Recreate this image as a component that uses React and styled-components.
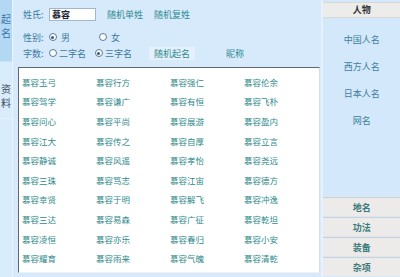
import React from "react";
import styled, { createGlobalStyle } from "styled-components";

const Global = createGlobalStyle`
  html, body { margin: 0; padding: 0; background: #d6eafb; }
  body { font-family: "Noto Sans CJK SC", "Liberation Sans", sans-serif; }
`;

const Frame = styled.div`
  width: 400px;
  height: 277px;
  display: flex;
  overflow: hidden;
  background: #d6eafb;
`;

const LeftTabs = styled.div`
  width: 12px;
  display: flex;
  flex-direction: column;
  border-right: 1px solid #eaf4fd;
  background: #d8ecfb;
`;

const Tab = styled.div`
  height: ${(p) => p.$h}px;
  box-sizing: border-box;
  background: ${(p) => (p.$active ? "#b3d8f4" : "#d8ecfb")};
  border-bottom: 1px solid ${(p) => (p.$active ? "#c4e0f6" : "#e6f2fc")};
  color: ${(p) => (p.$active ? "#3c74ac" : "#3b4a5a")};
  font-size: 10px;
  line-height: 14px;
  padding-top: ${(p) => p.$pt}px;
  display: flex;
  flex-direction: column;
  align-items: flex-end;
  overflow: hidden;
  span { display: block; width: 10px; margin-right: 1px; }
`;

const Main = styled.div`
  width: 309px;
  display: flex;
  flex-direction: column;
  padding-left: 5px;
  box-sizing: border-box;
`;

const Row = styled.div`
  display: flex;
  align-items: center;
  height: 14px;
  margin-top: ${(p) => p.$mt}px;
  padding-left: 5px;
  font-size: 9px;
  color: #3d7aa0;
`;

const Label = styled.div`
  width: 26px;
  white-space: nowrap;
`;

const NameInput = styled.div`
  width: 47px;
  height: 13px;
  box-sizing: border-box;
  background: #fff;
  border: 1px solid #9fb8cc;
  font-size: 9px;
  line-height: 11px;
  padding-left: 2px;
  color: #223;
  font-weight: 600;
`;

const Link = styled.div`
  margin-left: ${(p) => p.$ml}px;
  color: #2f8a8e;
  white-space: nowrap;
`;

const Button = styled.div`
  margin-left: ${(p) => p.$ml}px;
  width: 46px;
  height: 13px;
  background: #e4f0fa;
  color: #2f8a8e;
  display: flex;
  align-items: center;
  justify-content: center;
  white-space: nowrap;
`;

const Option = styled.div`
  display: flex;
  align-items: center;
  width: ${(p) => p.$w}px;
  gap: ${(p) => p.$gap || 2}px;
  white-space: nowrap;
  color: #3d7aa0;
`;

const Radio = styled.span`
  width: 8px;
  height: 8px;
  box-sizing: border-box;
  border-radius: 50%;
  border: 1px solid #5a7a98;
  background: #fff;
  display: inline-flex;
  align-items: center;
  justify-content: center;
  &::after {
    content: "";
    width: 3px;
    height: 3px;
    border-radius: 50%;
    background: ${(p) => (p.$on ? "#3a5878" : "transparent")};
  }
`;

const ListBox = styled.div`
  margin-top: 7px;
  width: 302px;
  height: 206px;
  box-sizing: border-box;
  background: #fff;
  border-top: 1px solid #5f6870;
  border-left: 1px solid #5f6870;
  border-right: 1px solid #d6dde4;
  border-bottom: 1px solid #eef2f6;
  padding: 4px 0 0 3px;
  display: grid;
  grid-template-columns: repeat(4, 74px);
  grid-auto-rows: 19.6px;
  align-items: center;
`;

const NameItem = styled.div`
  font-size: 8.5px;
  color: #2f8a8a;
  white-space: nowrap;
`;

const Right = styled.div`
  width: 77px;
  margin-left: 1px;
  border-left: 2px solid #e6f2fd;
  display: flex;
  flex-direction: column;
  background: #d3e8fa;
`;

const Header = styled.div`
  margin-top: 2px;
  height: 14px;
  background: #ececea;
  border-top: 1px solid #d8d8d8;
  border-bottom: 1px solid #d8d8d8;
  font-size: 9px;
  font-weight: 700;
  color: #333;
  display: flex;
  align-items: center;
  justify-content: center;
`;

const SubList = styled.div`
  height: 180px;
  display: flex;
  flex-direction: column;
  padding-top: 8px;
  box-sizing: border-box;
`;

const SubItem = styled.div`
  height: 27px;
  display: flex;
  align-items: center;
  justify-content: center;
  font-size: 9px;
  color: #3f7f9a;
`;

const CatButton = styled.div`
  height: 18px;
  margin-bottom: 1px;
  background: #ecebea;
  border-top: 1px solid #d0d0d0;
  display: flex;
  align-items: center;
  justify-content: center;
  font-size: 9px;
  font-weight: 700;
  color: #3b7a7a;
`;

const names = [
  "慕容玉弓", "慕容行方", "慕容强仁", "慕容伦余",
  "慕容驾学", "慕容谦广", "慕容有恒", "慕容飞朴",
  "慕容问心", "慕容平尚", "慕容展游", "慕容盈内",
  "慕容江大", "慕容传之", "慕容自厚", "慕容立言",
  "慕容静诚", "慕容风遥", "慕容孝怡", "慕容尧远",
  "慕容三珠", "慕容笃志", "慕容江宙", "慕容德方",
  "慕容幸贤", "慕容于明", "慕容解飞", "慕容冲逸",
  "慕容三达", "慕容易森", "慕容广征", "慕容乾坦",
  "慕容凌恒", "慕容亦乐", "慕容春归", "慕容小安",
  "慕容耀育", "慕容雨来", "慕容气魄", "慕容清乾",
];

export default function App() {
  return (
    <>
      <Global />
      <Frame>
        <LeftTabs>
          <Tab $active $h={62} $pt={12}>
            <span>起</span>
            <span>名</span>
          </Tab>
          <Tab $h={57} $pt={20}>
            <span>资</span>
            <span>料</span>
          </Tab>
        </LeftTabs>
        <Main>
          <Row $mt={7}>
            <Label>姓氏:</Label>
            <NameInput>慕容</NameInput>
            <Link $ml={11}>随机单姓</Link>
            <Link $ml={11}>随机复姓</Link>
          </Row>
          <Row $mt={9}>
            <Label>性别:</Label>
            <Option $w={50} $gap={4}>
              <Radio $on />男
            </Option>
            <Option $w={40} $gap={4}>
              <Radio />女
            </Option>
          </Row>
          <Row $mt={2}>
            <Label>字数:</Label>
            <Option $w={46}>
              <Radio />二字名
            </Option>
            <Option $w={40}>
              <Radio $on />三字名
            </Option>
            <Button $ml={14}>随机起名</Button>
            <Link $ml={31}>昵称</Link>
          </Row>
          <ListBox>
            {names.map((n, i) => (
              <NameItem key={i}>{n}</NameItem>
            ))}
          </ListBox>
        </Main>
        <Right>
          <Header>人物</Header>
          <SubList>
            <SubItem>中国人名</SubItem>
            <SubItem>西方人名</SubItem>
            <SubItem>日本人名</SubItem>
            <SubItem>网名</SubItem>
          </SubList>
          <CatButton>地名</CatButton>
          <CatButton>功法</CatButton>
          <CatButton>装备</CatButton>
          <CatButton>杂项</CatButton>
        </Right>
      </Frame>
    </>
  );
}
